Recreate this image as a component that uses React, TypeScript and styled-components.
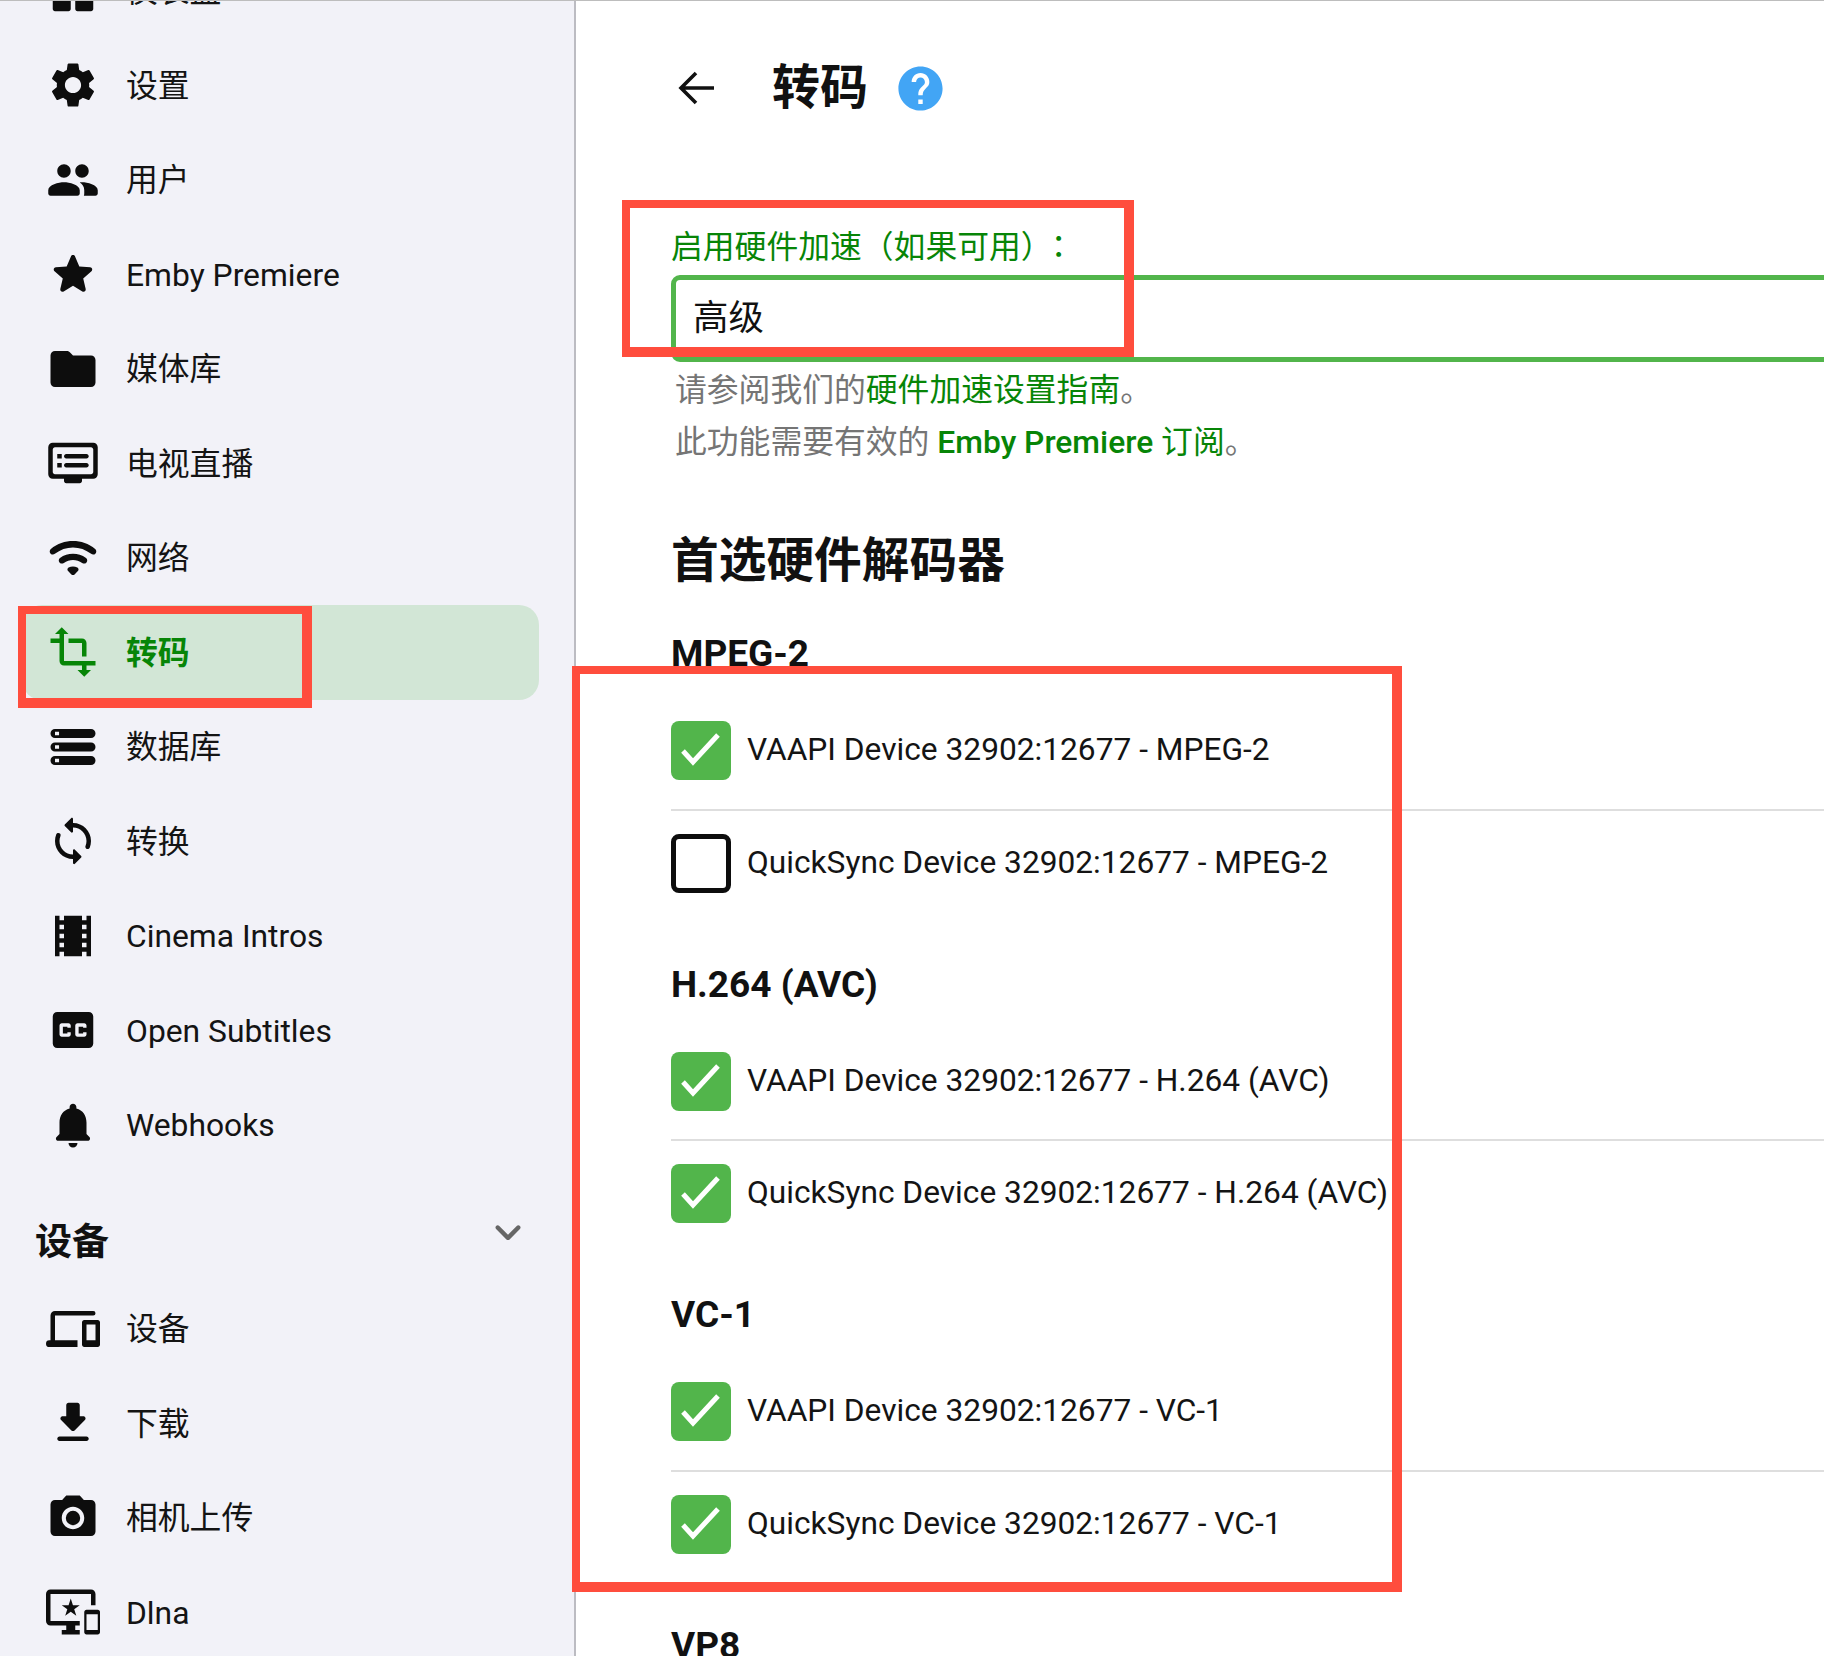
import React from "react";
import styled, { createGlobalStyle } from "styled-components";

const Global = createGlobalStyle`
  html, body { margin: 0; padding: 0; height: 1656px; overflow: hidden; background: #fff; }
  body { font-family: Roboto, "Noto Sans CJK SC", sans-serif; color: #0d0d0d; }
  * { box-sizing: border-box; }
`;

const Page = styled.div`
  position: relative;
  display: flex;
  width: 1824px;
  height: 1656px;
  overflow: hidden;
  border-top: 1px solid #bdbdbd;
`;

const Sidebar = styled.nav`
  flex: 0 0 576px;
  height: 100%;
  overflow: hidden;
  background: #f2f2f8;
  border-right: 2px solid #bcbcc2;
`;

const NavList = styled.div`
  margin-top: -57.5px;
`;

const NavItem = styled.div<{ $active?: boolean }>`
  display: flex;
  align-items: center;
  width: 517px;
  height: 94.5px;
  margin-left: 22px;
  padding-left: 24px;
  border-radius: 20px;
  font-size: 31.8px;
  line-height: 40px;
  font-weight: ${(p) => (p.$active ? 700 : 400)};
  color: ${(p) => (p.$active ? "#078507" : "#141414")};
  background: ${(p) => (p.$active ? "#d2e6d6" : "transparent")};
`;

const NavLabel = styled.span`
  padding-top: 1px;
`;

const NavIcon = styled.svg`
  flex: 0 0 54px;
  width: 54px;
  height: 54px;
  margin-right: 26px;
  fill: currentColor;
`;

const NavIconDark = styled(NavIcon)<{ $active?: boolean }>`
  color: ${(p) => (p.$active ? "#078507" : "#0d0d0d")};
`;

const GroupHeader = styled.div`
  display: flex;
  align-items: flex-start;
  justify-content: space-between;
  height: 109.4px;
  padding: 41px 39px 0 35px;
  font-size: 37px;
  line-height: 60px;
  font-weight: 700;
  color: #111;
`;

const Chevron = styled.svg`
  width: 54px;
  height: 54px;
  margin-top: -8px;
  fill: #666;
`;

const Main = styled.main`
  flex: 1;
  min-width: 0;
  overflow: hidden;
  padding: 57px 0 0 95px;
`;

const Content = styled.div`
  width: 1300px;
`;

const Header = styled.header`
  display: flex;
  align-items: center;
  height: 60px;
`;

const BackIcon = styled.svg`
  flex: 0 0 40px;
  width: 40px;
  height: 40px;
  margin: 0 0 0 6px;
  fill: none;
  stroke: #111;
  stroke-width: 3.6;
`;

const Title = styled.h1`
  margin: 0 0 0 55px;
  font-size: 48px;
  line-height: 60px;
  font-weight: 700;
  color: #111;
`;

const HelpIcon = styled.svg`
  width: 53px;
  height: 53px;
  margin-left: 26px;
  fill: #42a5f5;
`;

const Field = styled.div`
  margin-top: 110px;
`;

const FieldLabel = styled.label`
  display: block;
  height: 47px;
  font-size: 31.8px;
  line-height: 33px;
  color: #078507;
`;

const Colon = styled.span`
  margin-left: 6px;
  font-family: "Noto Sans CJK TC", sans-serif;
`;

const SelectBox = styled.div`
  display: flex;
  align-items: center;
  height: 87px;
  padding: 0 17px 8px;
  border: 5px solid #52b54b;
  border-radius: 9px;
  font-size: 35.4px;
  color: #111;
`;

const HelpText = styled.div`
  padding: 2px 0 0 4px;
  font-size: 31.8px;
  line-height: 52px;
  color: #757575;
`;

const HelpLine = styled.div``;

const Link = styled.span<{ $strong?: boolean }>`
  color: #078507;
  font-weight: ${(p) => (p.$strong ? 500 : 400)};
`;

const SectionTitle = styled.h2`
  margin: 63px 0 -0.4px;
  font-size: 47.7px;
  line-height: 60px;
  font-weight: 700;
  color: #111;
`;

const CodecTitle = styled.h3`
  margin: 41.5px 0 22px;
  font-size: 37px;
  line-height: 44px;
  font-weight: 700;
  color: #111;
`;

const Row = styled.div`
  display: flex;
  align-items: center;
  padding: 24px 0 28.5px;
  &:not(:last-child) { border-bottom: 2px solid #dedede; }
`;

const Check = styled.span<{ $on: boolean }>`
  display: inline-flex;
  flex: 0 0 60px;
  width: 60px;
  height: 59px;
  margin-top: -1px;
  border-radius: 8px;
  background: ${(p) => (p.$on ? "#52b54b" : "#fff")};
  border: ${(p) => (p.$on ? "none" : "5px solid #0d0d0d")};
`;

const CheckMark = styled.svg`
  width: 60px;
  height: 59px;
  fill: none;
  stroke: #fff;
  stroke-width: 5;
`;

const RowLabel = styled.span`
  margin: -2px 0 0 16px;
  font-size: 31.7px;
  line-height: 40px;
  color: #141414;
  white-space: nowrap;
`;

const Annotation = styled.div<{ $l: number; $t: number; $w: number; $h: number }>`
  position: absolute;
  left: ${(p) => p.$l}px;
  top: ${(p) => p.$t}px;
  width: ${(p) => p.$w}px;
  height: ${(p) => p.$h}px;
  border-style: solid;
  border-color: #ff4d3d;
  border-width: 8px 10px 10px 8px;
  pointer-events: none;
`;

const P: Record<string, React.ReactNode> = {
  dashboard: <path d="M4 13h6c.55 0 1-.45 1-1V4c0-.55-.45-1-1-1H4c-.55 0-1 .45-1 1v8c0 .55.45 1 1 1zm0 8h6c.55 0 1-.45 1-1v-4c0-.55-.45-1-1-1H4c-.55 0-1 .45-1 1v4c0 .55.45 1 1 1zm10 0h6c.55 0 1-.45 1-1v-8c0-.55-.45-1-1-1h-6c-.55 0-1 .45-1 1v8c0 .55.45 1 1 1zM13 4v4c0 .55.45 1 1 1h6c.55 0 1-.45 1-1V4c0-.55-.45-1-1-1h-6c-.55 0-1 .45-1 1z" />,
  settings: <path d="M19.14 12.94c.04-.3.06-.61.06-.94 0-.32-.02-.64-.07-.94l2.03-1.58c.18-.14.23-.41.12-.61l-1.92-3.32c-.12-.22-.37-.29-.59-.22l-2.39.96c-.5-.38-1.03-.7-1.62-.94l-.36-2.54c-.04-.24-.24-.41-.48-.41h-3.84c-.24 0-.43.17-.47.41l-.36 2.54c-.59.24-1.13.57-1.62.94l-2.39-.96c-.22-.08-.47 0-.59.22L2.74 8.87c-.12.21-.08.47.12.61l2.03 1.58c-.05.3-.09.63-.09.94s.02.64.07.94l-2.03 1.58c-.18.14-.23.41-.12.61l1.92 3.32c.12.22.37.29.59.22l2.39-.96c.5.38 1.03.7 1.62.94l.36 2.54c.05.24.24.41.48.41h3.84c.24 0 .44-.17.47-.41l.36-2.54c.59-.24 1.13-.56 1.62-.94l2.39.96c.22.08.47 0 .59-.22l1.92-3.32c.12-.22.07-.47-.12-.61l-2.01-1.58zM12 15.6c-1.98 0-3.6-1.62-3.6-3.6s1.62-3.6 3.6-3.6 3.6 1.62 3.6 3.6-1.62 3.6-3.6 3.6z" />,
  people: <path d="M16 11c1.66 0 2.99-1.34 2.99-3S17.66 5 16 5s-3 1.34-3 3 1.34 3 3 3zm-8 0c1.66 0 2.99-1.34 2.99-3S9.66 5 8 5 5 6.34 5 8s1.34 3 3 3zm0 2c-2.33 0-7 1.17-7 3.5V18c0 .55.45 1 1 1h12c.55 0 1-.45 1-1v-1.5c0-2.33-4.67-3.5-7-3.5zm8 0c-.29 0-.62.02-.97.05.02.01.03.03.04.04 1.14.83 1.93 1.94 1.93 3.41V18c0 .35-.07.69-.18 1H22c.55 0 1-.45 1-1v-1.5c0-2.33-4.67-3.5-7-3.5z" />,
  star: <path d="M12 17.27l4.15 2.51c.76.46 1.69-.22 1.49-1.08l-1.1-4.72 3.67-3.18c.67-.58.31-1.68-.57-1.75l-4.83-.41-1.89-4.46c-.34-.81-1.5-.81-1.84 0L9.19 8.63l-4.83.41c-.88.07-1.24 1.17-.57 1.75l3.67 3.18-1.1 4.72c-.2.86.73 1.54 1.49 1.08l4.15-2.5z" />,
  folder: <path d="M10.59 4.59C10.21 4.21 9.7 4 9.17 4H4c-1.1 0-1.99.9-1.99 2L2 18c0 1.1.9 2 2 2h16c1.1 0 2-.9 2-2V8c0-1.1-.9-2-2-2h-8l-1.41-1.41z" />,
  dvr: <path d="M21 3H3c-1.1 0-2 .9-2 2v12c0 1.1.9 2 2 2h5v1c0 .55.45 1 1 1h6c.55 0 1-.45 1-1v-1h5c1.1 0 1.99-.9 1.99-2L23 5c0-1.1-.9-2-2-2zm-1 14H4c-.55 0-1-.45-1-1V6c0-.55.45-1 1-1h16c.55 0 1 .45 1 1v10c0 .55-.45 1-1 1zm-2-9H9c-.55 0-1 .45-1 1s.45 1 1 1h9c.55 0 1-.45 1-1s-.45-1-1-1zm0 4H9c-.55 0-1 .45-1 1s.45 1 1 1h9c.55 0 1-.45 1-1s-.45-1-1-1zM7 8H5v2h2V8zm0 4H5v2h2v-2z" />,
  wifi: <path d="M2.06 10.06c.51.51 1.32.56 1.87.1 4.67-3.84 11.45-3.84 16.13-.01.56.46 1.38.42 1.89-.09.59-.59.55-1.57-.1-2.1-5.71-4.67-13.97-4.67-19.69 0-.65.52-.7 1.5-.1 2.1zm7.76 7.76l1.47 1.47c.39.39 1.02.39 1.41 0l1.47-1.47c.47-.47.37-1.28-.23-1.59-1.22-.63-2.68-.63-3.91 0-.58.31-.69 1.12-.21 1.59zm-3.73-3.73c.49.49 1.26.54 1.83.13 2.44-1.73 5.72-1.73 8.16 0 .57.4 1.34.36 1.83-.13l.01-.01c.6-.6.56-1.62-.13-2.11-3.44-2.49-8.13-2.49-11.58 0-.69.5-.73 1.51-.12 2.12z" />,
  transform: <path d="M22 18v-2H8V4h2L7 1 4 4h2v2H2v2h4v8c0 1.1.9 2 2 2h8v2h-2l3 3 3-3h-2v-2h4zM10 8h6v6h2V8c0-1.1-.9-2-2-2h-6v2z" />,
  storage: <path fillRule="evenodd" d="M4 4h16a2 2 0 0 1 0 4H4a2 2 0 0 1 0-4zm0 1.2v1.6h1.8V5.2H4zM4 10h16a2 2 0 0 1 0 4H4a2 2 0 0 1 0-4zm0 1.2v1.6h1.8v-1.6H4zM4 16h16a2 2 0 0 1 0 4H4a2 2 0 0 1 0-4zm0 1.2v1.6h1.8v-1.6H4z" />,
  sync: <path d="M12 4V2.21c0-.45-.54-.67-.85-.35l-2.8 2.79c-.2.2-.2.51 0 .71l2.79 2.79c.32.31.86.09.86-.36V6c3.31 0 6 2.69 6 6 0 .79-.15 1.56-.44 2.25-.15.36-.04.77.23 1.04.51.51 1.37.33 1.64-.34.37-.91.57-1.91.57-2.95 0-4.42-3.58-8-8-8zm0 14c-3.31 0-6-2.69-6-6 0-.79.15-1.56.44-2.25.15-.36.04-.77-.23-1.04-.51-.51-1.37-.33-1.64.34C4.2 9.96 4 10.96 4 12c0 4.42 3.58 8 8 8v1.79c0 .45.54.67.85.35l2.79-2.79c.2-.2.2-.51 0-.71l-2.79-2.79c-.31-.31-.85-.09-.85.36V18z" />,
  movie: <path d="M18 3v2h-2V3H8v2H6V3H4v18h2v-2h2v2h8v-2h2v2h2V3h-2zM8 17H6v-2h2v2zm0-4H6v-2h2v2zm0-4H6V7h2v2zm10 8h-2v-2h2v2zm0-4h-2v-2h2v2zm0-4h-2V7h2v2z" />,
  cc: <path d="M19 4H5c-1.11 0-2 .9-2 2v12c0 1.1.89 2 2 2h14c1.1 0 2-.9 2-2V6c0-1.1-.9-2-2-2zm-8 7H9.5v-.5h-2v3h2V13H11v1c0 .55-.45 1-1 1H7c-.55 0-1-.45-1-1v-4c0-.55.45-1 1-1h3c.55 0 1 .45 1 1v1zm7 0h-1.5v-.5h-2v3h2V13H18v1c0 .55-.45 1-1 1h-3c-.55 0-1-.45-1-1v-4c0-.55.45-1 1-1h3c.55 0 1 .45 1 1v1z" />,
  bell: <path d="M12 22c1.1 0 2-.9 2-2h-4c0 1.1.9 2 2 2zm6-6v-5c0-3.07-1.63-5.64-4.5-6.32V4c0-.83-.67-1.5-1.5-1.5s-1.5.67-1.5 1.5v.68C7.64 5.36 6 7.92 6 11v5l-1.29 1.29c-.63.63-.19 1.71.7 1.71h13.17c.89 0 1.34-1.08.71-1.71L18 16z" />,
  devices: <path fillRule="evenodd" d="M4 6h17a1 1 0 0 0 0-2H4c-1.1 0-2 .9-2 2v11H1.5a1.5 1.5 0 0 0 0 3H14v-3H4V6zm19 2h-6c-.55 0-1 .45-1 1v10c0 .55.45 1 1 1h6c.55 0 1-.45 1-1V9c0-.55-.45-1-1-1zm-1 9h-4v-7h4v7z" />,
  download: <path d="M16.59 9H15V4c0-.55-.45-1-1-1h-4c-.55 0-1 .45-1 1v5H7.41c-.89 0-1.34 1.08-.71 1.71l4.59 4.59c.39.39 1.02.39 1.41 0l4.59-4.59c.63-.63.19-1.71-.7-1.71zM5 19c0 .55.45 1 1 1h12c.55 0 1-.45 1-1s-.45-1-1-1H6c-.55 0-1 .45-1 1z" />,
  camera: <><circle cx="12" cy="12" r="3.2" /><path d="M9 2L7.17 4H4c-1.1 0-2 .9-2 2v12c0 1.1.9 2 2 2h16c1.1 0 2-.9 2-2V6c0-1.1-.9-2-2-2h-3.17L15 2H9zm3 15c-2.76 0-5-2.24-5-5s2.24-5 5-5 5 2.24 5 5-2.24 5-5 5z" /></>,
  dlna: <path d="M23 11.01L18 11c-.55 0-1 .45-1 1v9c0 .55.45 1 1 1h5c.55 0 1-.45 1-1v-9c0-.55-.45-.99-1-.99zM23 20h-5v-7h5v7zM20 2H2C.89 2 0 2.89 0 4v12c0 1.1.89 2 2 2h7v2H7v2h8v-2h-2v-2h2v-2H2V4h18v5h2V4c0-1.11-.9-2-2-2zm-8.03 7L11 6l-.97 3H7l2.47 1.76-.94 2.91 2.47-1.8 2.47 1.8-.94-2.91L15 9h-3.03z" />,
};

const topItems = [
  ["dashboard", "仪表盘"],
  ["settings", "设置"],
  ["people", "用户"],
  ["star", "Emby Premiere"],
  ["folder", "媒体库"],
  ["dvr", "电视直播"],
  ["wifi", "网络"],
  ["transform", "转码", true],
  ["storage", "数据库"],
  ["sync", "转换"],
  ["movie", "Cinema Intros"],
  ["cc", "Open Subtitles"],
  ["bell", "Webhooks"],
] as const;

const deviceItems = [
  ["devices", "设备"],
  ["download", "下载"],
  ["camera", "相机上传"],
  ["dlna", "Dlna"],
] as const;

const codecs = [
  { name: "MPEG-2", on: [true, false] },
  { name: "H.264 (AVC)", on: [true, true] },
  { name: "VC-1", on: [true, true] },
];

function Item({ icon, label, active }: { icon: string; label: string; active?: boolean }) {
  return (
    <NavItem $active={active}>
      <NavIconDark $active={active} viewBox="0 0 24 24">{P[icon]}</NavIconDark>
      <NavLabel>{label}</NavLabel>
    </NavItem>
  );
}

function DeviceRow({ on, label }: { on: boolean; label: string }) {
  return (
    <Row>
      <Check $on={on}>
        {on && (
          <CheckMark viewBox="0 0 60 59">
            <polyline points="12,30 22,41 47,14" />
          </CheckMark>
        )}
      </Check>
      <RowLabel>{label}</RowLabel>
    </Row>
  );
}

export default function App() {
  return (
    <Page>
      <Global />
      <Sidebar>
        <NavList>
          {topItems.map((it) => (
            <Item key={it[1]} icon={it[0]} label={it[1]} active={it.length > 2} />
          ))}
          <GroupHeader>
            设备
            <Chevron viewBox="0 0 24 24">
              <path d="M15.88 9.29L12 13.17 8.12 9.29c-.39-.39-1.02-.39-1.41 0-.39.39-.39 1.02 0 1.41l4.59 4.59c.39.39 1.02.39 1.41 0l4.59-4.59c.39-.39.39-1.02 0-1.41-.39-.38-1.03-.39-1.42 0z" />
            </Chevron>
          </GroupHeader>
          {deviceItems.map((it) => (
            <Item key={it[0]} icon={it[0]} label={it[1]} />
          ))}
        </NavList>
      </Sidebar>
      <Main>
        <Content>
          <Header>
            <BackIcon viewBox="0 0 40 40">
              <path d="M37 20H5M19 5L4 20l15 15" />
            </BackIcon>
            <Title>转码</Title>
            <HelpIcon viewBox="0 0 24 24">
              <path d="M12 2C6.48 2 2 6.48 2 12s4.48 10 10 10 10-4.48 10-10S17.52 2 12 2zm1 17h-2v-2h2v2zm2.07-7.75l-.9.92C13.45 12.9 13 13.5 13 15h-2v-.5c0-1.1.45-2.1 1.17-2.83l1.24-1.26c.37-.36.59-.86.59-1.41 0-1.1-.9-2-2-2s-2 .9-2 2H8c0-2.21 1.79-4 4-4s4 1.79 4 4c0 .88-.36 1.68-.93 2.25z" />
            </HelpIcon>
          </Header>
          <Field>
            <FieldLabel>启用硬件加速（如果可用）<Colon>：</Colon></FieldLabel>
            <SelectBox>高级</SelectBox>
            <HelpText>
              <HelpLine>请参阅我们的<Link>硬件加速设置指南</Link>。</HelpLine>
              <HelpLine>此功能需要有效的 <Link $strong>Emby Premiere</Link> <Link>订阅</Link>。</HelpLine>
            </HelpText>
          </Field>
          <SectionTitle>首选硬件解码器</SectionTitle>
          {codecs.map((c) => (
            <section key={c.name}>
              <CodecTitle>{c.name}</CodecTitle>
              <div>
                <DeviceRow on={c.on[0]} label={`VAAPI Device 32902:12677 - ${c.name}`} />
                <DeviceRow on={c.on[1]} label={`QuickSync Device 32902:12677 - ${c.name}`} />
              </div>
            </section>
          ))}
          <CodecTitle>VP8</CodecTitle>
        </Content>
      </Main>
      <Annotation $l={18} $t={605} $w={294} $h={102} />
      <Annotation $l={622} $t={199} $w={512} $h={157} />
      <Annotation $l={572} $t={665} $w={830} $h={926} />
    </Page>
  );
}
